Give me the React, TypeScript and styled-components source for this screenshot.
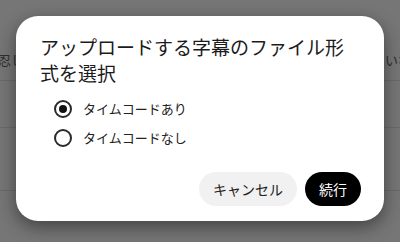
import React, { useState } from "react";
import styled, { createGlobalStyle } from "styled-components";

const GlobalStyle = createGlobalStyle`
  html, body {
    margin: 0;
    padding: 0;
    width: 400px;
    height: 242px;
    overflow: hidden;
    background: #767676;
    font-family: "Noto Sans CJK JP", "Noto Sans", sans-serif;
  }
`;

const Page = styled.div`
  position: relative;
  width: 400px;
  height: 242px;
  background: #767676;
  overflow: hidden;
`;

const BackRule = styled.div<{ $top: number }>`
  position: absolute;
  left: 0;
  right: 0;
  top: ${({ $top }) => $top}px;
  height: 1px;
  background: #6a6a6a;
`;

const BackText = styled.span<{ $left: number }>`
  position: absolute;
  top: 50px;
  left: ${({ $left }) => $left}px;
  font-size: 13px;
  color: #2e2e2e;
  white-space: nowrap;
`;

const Overlay = styled.div`
  position: absolute;
  inset: 0;
  display: flex;
  align-items: flex-start;
  justify-content: center;
  padding-top: 16px;
`;

const Dialog = styled.div`
  width: 368px;
  box-sizing: border-box;
  background: #fff;
  border-radius: 22px;
  padding: 18px 23px 15px 23px;
  box-shadow: 0 6px 18px rgba(0, 0, 0, 0.45);
  display: flex;
  flex-direction: column;
`;

const Title = styled.h2`
  margin: 0 0 0 1px;
  font-size: 19px;
  line-height: 26px;
  font-weight: 400;
  color: #1b1b1b;
`;

const Options = styled.div`
  display: flex;
  flex-direction: column;
  gap: 10px;
  margin-top: 13px;
  padding-left: 15px;
`;

const Option = styled.label`
  display: flex;
  align-items: center;
  gap: 11px;
  font-size: 13px;
  color: #222;
  cursor: pointer;
`;

const Ring = styled.span<{ $checked: boolean }>`
  width: 18px;
  height: 18px;
  box-sizing: border-box;
  border-radius: 50%;
  border: 2px solid #2a2a2a;
  display: flex;
  align-items: center;
  justify-content: center;
  &::after {
    content: "";
    width: 8px;
    height: 8px;
    border-radius: 50%;
    background: #111;
    display: ${({ $checked }) => ($checked ? "block" : "none")};
  }
`;

const Actions = styled.div`
  display: flex;
  justify-content: flex-end;
  gap: 8px;
  margin-top: 25px;
`;

const Button = styled.button<{ $primary?: boolean }>`
  height: 34px;
  border: none;
  border-radius: 17px;
  padding: 0 14px;
  font-family: inherit;
  font-size: 14px;
  background: ${({ $primary }) => ($primary ? "#000" : "#f1f1f1")};
  color: ${({ $primary }) => ($primary ? "#fff" : "#222")};
  cursor: pointer;
`;

export default function App() {
  const [choice, setChoice] = useState("with");
  return (
    <Page>
      <GlobalStyle />
      <BackRule $top={80} />
      <BackRule $top={127} />
      <BackRule $top={190} />
      <BackText $left={-2}>忍し</BackText>
      <BackText $left={385}>いな</BackText>
      <Overlay>
        <Dialog>
          <Title>アップロードする字幕のファイル形式を選択</Title>
          <Options>
            <Option onClick={() => setChoice("with")}>
              <Ring $checked={choice === "with"} />
              タイムコードあり
            </Option>
            <Option onClick={() => setChoice("without")}>
              <Ring $checked={choice === "without"} />
              タイムコードなし
            </Option>
          </Options>
          <Actions>
            <Button>キャンセル</Button>
            <Button $primary>続行</Button>
          </Actions>
        </Dialog>
      </Overlay>
    </Page>
  );
}
